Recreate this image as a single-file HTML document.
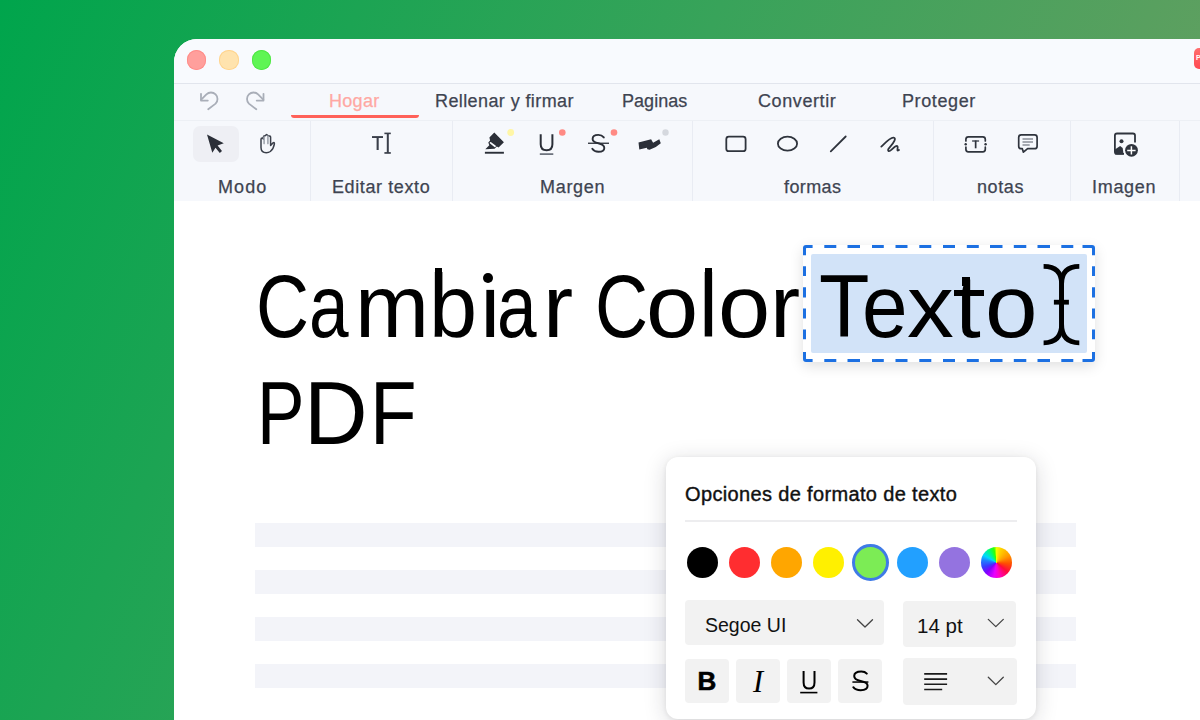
<!DOCTYPE html>
<html><head><meta charset="utf-8">
<style>
*{margin:0;padding:0;box-sizing:border-box}
html,body{width:1200px;height:720px;overflow:hidden}
body{position:relative;font-family:"Liberation Sans",sans-serif;
background:linear-gradient(114deg,rgb(0,165,76) 0%,rgb(56,163,90) 47.5%,rgb(88,160,95) 76%,rgb(114,158,100) 100%);}
.a{position:absolute}
svg.a{left:0;top:0;overflow:visible}
.win{position:absolute;left:0;top:0;width:1200px;height:720px;clip-path:inset(39px 0 0 174px round 23px 0 0 0);background:#fff}
.title{left:174px;top:39px;width:1026px;height:44px;background:#F8FAFE}
.sep1{left:174px;top:82.5px;width:1026px;height:2px;background:linear-gradient(#E0E4EC,#E6E9F0)}
.menu{left:174px;top:84px;width:1026px;height:36px;background:#F6F8FC}
.sep2{left:174px;top:120px;width:1026px;height:1px;background:#EDF0F5}
.tool{left:174px;top:121px;width:1026px;height:80px;background:#F6F8FC}
.vs{top:121px;width:1.3px;height:80px;background:#E9ECF3}
.dot{border-radius:50%}
.tab{top:90px;font-size:18px;color:#3E4451;-webkit-text-stroke:0.25px currentColor;white-space:nowrap;line-height:22px}
.lab{top:175.5px;font-size:18px;color:#3E4451;-webkit-text-stroke:0.25px currentColor;white-space:nowrap;line-height:22px}
.big{font-size:89px;color:#000;white-space:nowrap;line-height:100px;transform-origin:0 0}
.g{font-size:89px;color:#000;white-space:nowrap;line-height:100px;transform-origin:0 0}
.bar{left:255px;width:821px;height:24px;background:#F3F4F9}
.pop{left:666px;top:457px;width:369.5px;height:262px;background:#fff;border-radius:12px;box-shadow:0 4px 22px rgba(30,30,40,0.17),0 1px 5px rgba(0,0,0,0.07)}
.sw{width:31px;height:31px;border-radius:50%;top:546.5px}
.dd{background:#F2F2F2;border-radius:4px}
.btn{top:659px;width:44px;height:44px;background:#F2F2F2;border-radius:4px}
</style></head><body>
<div class="win">
  <div class="a title"></div>
  <div class="a sep1"></div>
  <div class="a menu"></div>
  <div class="a sep2"></div>
  <div class="a tool"></div>
  <!-- traffic lights -->
  <div class="a dot" style="left:186.9px;top:50px;width:19.4px;height:19.6px;background:#FF9F9C;box-shadow:inset 0 0 0 0.9px #FF8C89"></div>
  <div class="a dot" style="left:219.1px;top:50px;width:19.6px;height:19.6px;background:#FFE3AE;box-shadow:inset 0 0 0 0.9px #FFD48E"></div>
  <div class="a dot" style="left:251.5px;top:50px;width:19.5px;height:19.5px;background:#5FF554;box-shadow:inset 0 0 0 0.9px #4FE645"></div>
  <!-- red badge top right -->
  <div class="a" style="left:1194px;top:48px;width:20px;height:21px;border-radius:5px;background:linear-gradient(#FF6E6E,#FF4A52)"></div><div class="a" style="left:1196px;top:54px;font-size:7px;line-height:8px;font-weight:bold;color:#fff">P</div>
  <!-- separators -->
  <div class="a vs" style="left:310px"></div>
  <div class="a vs" style="left:452px"></div>
  <div class="a vs" style="left:692px"></div>
  <div class="a vs" style="left:933px"></div>
  <div class="a vs" style="left:1070px"></div>
  <div class="a vs" style="left:1179px"></div>

  <!-- tabs -->
  <div class="a tab" style="left:329px;color:#FFA8A3;letter-spacing:0.3px">Hogar</div>
  <div class="a" style="left:291px;top:115px;width:128px;height:3px;background:#FF6159;border-radius:0 0 3px 3px"></div>
  <div class="a tab" style="left:435px;letter-spacing:0.4px">Rellenar y firmar</div>
  <div class="a tab" style="left:622px;letter-spacing:0.05px">Paginas</div>
  <div class="a tab" style="left:758px;letter-spacing:0.59px">Convertir</div>
  <div class="a tab" style="left:902px;letter-spacing:0.6px">Proteger</div>

  <!-- labels -->
  <div class="a lab" style="left:218px;letter-spacing:1.08px">Modo</div>
  <div class="a lab" style="left:332px;letter-spacing:0.6px">Editar texto</div>
  <div class="a lab" style="left:540px;letter-spacing:0.7px">Margen</div>
  <div class="a lab" style="left:784px;letter-spacing:0.4px">formas</div>
  <div class="a lab" style="left:977px;letter-spacing:0.6px">notas</div>
  <div class="a lab" style="left:1092px;letter-spacing:0.7px">Imagen</div>

  <!-- pressed button -->
  <div class="a" style="left:193px;top:126px;width:46px;height:36px;border-radius:7px;background:#EEEFF4"></div>

  <!-- toolbar icons -->
  <svg class="a" width="1200" height="720" viewBox="0 0 1200 720">
    <g fill="none" stroke="#A9AEB8" stroke-width="1.8" stroke-linecap="round" stroke-linejoin="round">
      <path d="M208.2,109.3 L215.6,103.6 A6.5,6.5 0 0 0 206.4,94.4 L201.2,99.6"/>
      <path d="M201,93.8 V100.6 H207.8"/>
      <g transform="translate(464.5,0) scale(-1,1)">
        <path d="M208.2,109.3 L215.6,103.6 A6.5,6.5 0 0 0 206.4,94.4 L201.2,99.6"/>
        <path d="M201,93.8 V100.6 H207.8"/>
      </g>
    </g>
    <!-- arrow cursor -->
    <path fill="#2B2F38" d="M207,134.5 L223.8,143.3 L217.6,145.6 L222,151 L219.8,153 L215.5,147.7 L212.3,152.8 Z"/>
    <!-- hand -->
    <g fill="none" stroke="#3A3F4A" stroke-width="1.5" stroke-linejoin="round" stroke-linecap="round">
      <path d="M261,146 V139.2 Q261,138.1 262.3,138.1 Q263.4,138.1 263.4,139.2 V137 Q263.4,135.8 264.9,135.8 L266.6,134.5 L268.3,135.8 Q270.6,135.8 270.6,137.2 V145.5 L272.9,142.9 Q274.6,141.8 274.4,143.8 Q273.6,148.8 270.3,151.5 Q268.6,152.7 266.3,152.7 Q261,152.7 261,147.5 Z"/>
      <path d="M264.1,137 V143.6 M267.9,136 V143.6" stroke="#A0A5AE" stroke-width="1.6"/>
    </g>
    <!-- T I -->
    <g fill="#3A3F4A">
      <rect x="372" y="136.1" width="11" height="1.9"/>
      <rect x="376.6" y="137" width="2.1" height="13"/>
      <rect x="384.4" y="132.6" width="6.4" height="1.6"/>
      <rect x="386.8" y="133" width="2" height="20"/>
      <rect x="384.4" y="152.1" width="6.4" height="1.7"/>
    </g>
    <!-- highlighter -->
    <g fill="#2B2F38">
      <path d="M494.3,132.6 L503.9,142.3 L498.6,147.6 L496.8,146.6 L494.6,148.8 L485.3,149.3 L489.3,145.2 L488.3,142.4 L490.1,140.4 L489.4,137.6 Z"/>
      <rect x="484.9" y="151.8" width="19" height="1.9"/>
    </g>
    <path d="M490.6,142.9 L495,146.3" stroke="#F7F9FD" stroke-width="1.8" stroke-linecap="round"/>
    <circle cx="510.7" cy="132.5" r="3.4" fill="#FFF6A6"/>
    <!-- U -->
    <path d="M540.7,134.2 V144.3 Q540.7,150.3 546.6,150.3 Q552.4,150.3 552.4,144.3 V134.2" fill="none" stroke="#2B2F38" stroke-width="2"/>
    <rect x="539.8" y="153.3" width="13.5" height="1.6" fill="#5F6470"/>
    <circle cx="562.3" cy="132.5" r="3.3" fill="#FF8A84"/>
    <!-- S strike -->
    <path d="M603.8,137.4 Q601.8,134.9 598.3,134.9 Q592.6,134.9 592.6,139 Q592.6,142 598.3,143.3 Q604.3,144.6 604.3,148 Q604.3,151.8 598.4,151.8 Q594.3,151.8 592.3,148.8" fill="none" stroke="#2B2F38" stroke-width="1.9" stroke-linecap="round"/>
    <rect x="588" y="142.6" width="21" height="1.3" fill="#2B2F38"/>
    <circle cx="614" cy="132.5" r="3.3" fill="#FF8A84"/>
    <!-- squiggle -->
    <path fill="#2B2F38" d="M638.5,142.4 L651.1,139.3 L653.1,142.8 L659.3,139.3 L660.8,143.2 L655.8,147.1 L649.6,149.8 L647.4,149.2 L646.8,147.8 L639.3,149.6 Z"/>
    <circle cx="665.5" cy="132.5" r="3.2" fill="#D5D8DE"/>
    <!-- shapes -->
    <g fill="none" stroke="#2F343D" stroke-width="1.8" stroke-linecap="round" stroke-linejoin="round">
      <rect x="726.3" y="136.7" width="19.3" height="14.5" rx="2.5"/>
      <ellipse cx="787.5" cy="143.65" rx="9.6" ry="7"/>
      <path d="M830.8,151.3 L845.7,136.5"/>
      <path d="M881.3,146.6 C886,142 890.5,137.2 893.5,137.6 C896.5,138 894.5,142 889.5,147.6 C886.8,150.6 888.5,152.4 891.6,149.6 C894.6,146.8 897.2,144.6 897.6,146.6 C898,149 896.2,151.8 899,150"/>
    </g>
    <!-- textbox -->
    <g fill="none" stroke="#2F343D" stroke-width="1.7" stroke-linecap="round">
      <path d="M965.9,140.9 V139.3 Q965.9,136.8 968.4,136.8 H982.8 Q985.3,136.8 985.3,139.3 V140.9"/>
      <path d="M965.9,147.2 V149.3 Q965.9,151.8 968.4,151.8 H982.8 Q985.3,151.8 985.3,149.3 V147.2"/>
    </g>
    <circle cx="965.7" cy="144.2" r="1.2" fill="#2F343D"/>
    <circle cx="985.6" cy="144.2" r="1.2" fill="#2F343D"/>
    <rect x="972.1" y="140.2" width="7" height="1.6" fill="#5A5F68"/>
    <rect x="974.8" y="140.5" width="1.7" height="7.8" fill="#2F343D"/>
    <!-- comment -->
    <path d="M1022.3,148.7 H1021.2 Q1018.7,148.7 1018.7,146.2 V137.4 Q1018.7,134.9 1021.2,134.9 H1034.6 Q1037.1,134.9 1037.1,137.4 V146.2 Q1037.1,148.7 1034.6,148.7 H1027.6 L1023.4,152.2 Z" fill="none" stroke="#2F343D" stroke-width="1.7" stroke-linejoin="round"/>
    <g stroke="#8A8F98" stroke-width="1.5">
      <path d="M1022.5,139.1 H1033 M1022.5,141.9 H1033 M1022.5,145 H1029.7"/>
    </g>
    <!-- image -->
    <path d="M1124,153.8 H1117 Q1114.9,153.8 1114.9,151.7 V135.6 Q1114.9,133.5 1117,133.5 H1132.9 Q1135,133.5 1135,135.6 V142.6" fill="none" stroke="#2F343D" stroke-width="1.8"/>
    <circle cx="1121.5" cy="141.3" r="2" fill="#2F343D"/>
    <path d="M1114.9,149.5 L1120.1,146.1 L1122.7,148 L1123.6,154.6 L1114.9,154.6 Z" fill="#2F343D"/>
    <circle cx="1131.5" cy="150.3" r="7.8" fill="#F7F9FD"/>
    <circle cx="1131.5" cy="150.3" r="6.4" fill="#2F343D"/>
    <path d="M1127.2,150.4 H1135.6 M1131.4,146.3 V154.6" stroke="#fff" stroke-width="1.5"/>
  </svg>

  <!-- document -->
  <div class="a bar" style="top:523px"></div>
  <div class="a bar" style="top:570px"></div>
  <div class="a bar" style="top:617px"></div>
  <div class="a bar" style="top:664px"></div>

  <div class="a g" style="left:256.10px;top:256px;transform:scaleX(0.825)">C</div>
  <div class="a g" style="left:309.00px;top:256px;transform:scaleX(0.800)">a</div>
  <div class="a g" style="left:355.25px;top:256px;transform:scaleX(0.999)">m</div>
  <div class="a g" style="left:429.17px;top:256px;transform:scaleX(0.972)">b</div>
  <div class="a g" style="left:477.77px;top:256px;transform:scaleX(0.988)">&#305;</div>
  <div class="a" style="left:483px;top:272.9px;width:9.9px;height:9.9px;border-radius:50%;background:#000"></div>
  <div class="a" style="left:434.8px;top:267.7px;width:7.6px;height:5px;background:#000"></div>
  <div class="a" style="left:704.7px;top:268px;width:7.4px;height:5px;background:#000"></div>
  <div class="a g" style="left:497.30px;top:256px;transform:scaleX(0.800)">a</div>
  <div class="a g" style="left:543.19px;top:256px;transform:scaleX(1.018)">r</div>
  <div class="a g" style="left:594.69px;top:256px;transform:scaleX(0.826)">C</div>
  <div class="a g" style="left:645.98px;top:256px;transform:scaleX(1.055)">o</div>
  <div class="a g" style="left:698.50px;top:256px;transform:scaleX(0.950)">l</div>
  <div class="a g" style="left:717.68px;top:256px;transform:scaleX(1.055)">o</div>
  <div class="a g" style="left:769.89px;top:256px;transform:scaleX(1.018)">r</div>
  <div class="a g" style="left:256.75px;top:363px;transform:scaleX(0.800)">P</div>
  <div class="a g" style="left:304.48px;top:363px;transform:scaleX(0.989)">D</div>
  <div class="a g" style="left:369.70px;top:363px;transform:scaleX(0.857)">F</div>

  <!-- selection box -->
  <div class="a" style="left:803px;top:245px;width:292px;height:117px;border-radius:3px;background:#fff;box-shadow:0 4px 14px rgba(0,0,0,0.13)"></div>
  <div class="a" style="left:811px;top:254px;width:276px;height:99px;border-radius:2px;background:#D2E3F8"></div>
  <div class="a g" style="left:818.64px;top:256px;transform:scaleX(0.928)">T</div>
  <div class="a g" style="left:861.71px;top:256px;transform:scaleX(0.921)">e</div>
  <div class="a g" style="left:906.65px;top:256px;transform:scaleX(1.052)">x</div>
  <div class="a g" style="left:955.4px;top:256px;transform:scaleX(1.04)">t</div>
  <div class="a" style="left:954.1px;top:290.3px;width:29.5px;height:5.9px;background:#000"></div>
  <div class="a" style="left:962.2px;top:277.1px;width:7.9px;height:9px;background:#000"></div>
  <div class="a g" style="left:984.55px;top:256px;transform:scaleX(1.062)">o</div>
  <svg class="a" width="1200" height="720" viewBox="0 0 1200 720">
    <g fill="#1C70E2">
      <!-- corners -->
      <path d="M803,255.3 V248 Q803,245 806,245 H812.6 V248 H806.6 Q806,248 806,248.6 V255.3 Z"/>
      <path d="M1095,255.3 V248 Q1095,245 1092,245 H1082.5 V248 H1091.4 Q1092,248 1092,248.6 V255.3 Z"/>
      <path d="M803,352 V359 Q803,362 806,362 H812.6 V359 H806.6 Q806,359 806,358.4 V352 Z"/>
      <path d="M1095,352 V359 Q1095,362 1092,362 H1082.5 V359 H1091.4 Q1092,359 1092,358.4 V352 Z"/>
    </g>
    <g stroke="#1C70E2" stroke-width="3">
      <path d="M824.3,246.5 H836.3 M847.5,246.5 H860 M872,246.5 H883.8 M895.5,246.5 H907.5 M919.3,246.5 H931.3 M943,246.5 H955 M966.8,246.5 H978.8 M990,246.5 H1002.5 M1013.8,246.5 H1026.3 M1037.5,246.5 H1050 M1061.3,246.5 H1073.3"/>
      <path d="M824.3,360.5 H836.3 M847.5,360.5 H860 M872,360.5 H883.8 M895.5,360.5 H907.5 M919.3,360.5 H931.3 M943,360.5 H955 M966.8,360.5 H978.8 M990,360.5 H1002.5 M1013.8,360.5 H1026.3 M1037.5,360.5 H1050 M1061.3,360.5 H1073.3"/>
      <path d="M804.5,266.2 V276.1 M804.5,287.3 V297.4 M804.5,308.6 V318.5 M804.5,329.4 V339.3"/>
      <path d="M1093.5,266.2 V276.1 M1093.5,287.3 V297.4 M1093.5,308.6 V318.5 M1093.5,329.4 V339.3"/>
    </g>
    <!-- I-beam -->
    <g fill="none" stroke="#000" stroke-width="4.8">
      <path d="M1043.6,266.4 Q1061.6,266.4 1061.6,284 V324 Q1061.6,342.8 1043.6,342.8"/>
      <path d="M1079.3,266.4 Q1061.6,266.4 1061.6,284 V324 Q1061.6,342.8 1079.3,342.8"/>
      <path d="M1053.9,302.2 H1068.9"/>
    </g>
  </svg>

  <!-- popup -->
  <div class="a pop"></div>
  <div class="a" style="left:685px;top:480.7px;font-size:20px;line-height:26px;color:#111;white-space:nowrap;letter-spacing:0.35px;-webkit-text-stroke:0.4px #111">Opciones de formato de texto</div>
  <div class="a" style="left:685px;top:520.3px;width:332px;height:1.5px;background:#EDEDEF"></div>
  <div class="a sw" style="left:687px;background:#000"></div>
  <div class="a sw" style="left:729px;background:#FF2D30"></div>
  <div class="a sw" style="left:771px;background:#FFA600"></div>
  <div class="a sw" style="left:813px;background:#FFF000"></div>
  <div class="a" style="left:851.8px;top:543.7px;width:37px;height:37px;border-radius:50%;background:#7CEC55;border:3.5px solid #3F7BE6"></div>
  <div class="a sw" style="left:897px;background:#22A0FF"></div>
  <div class="a sw" style="left:939px;background:#9473E0"></div>
  <div class="a sw" style="left:981px;background:conic-gradient(#F0FF00 0deg,#FFD000 20deg,#FF9A00 60deg,#FF5000 95deg,#FF0A3C 130deg,#FF00C8 170deg,#E800FF 190deg,#8000FF 225deg,#3A3AFF 250deg,#2080FF 280deg,#00D8FF 300deg,#00FF70 330deg,#30FF00 350deg,#F0FF00 360deg)"></div>

  <div class="a dd" style="left:685px;top:600px;width:199px;height:45px"></div>
  <div class="a dd" style="left:903px;top:601px;width:113px;height:46px"></div>
  <div class="a dd" style="left:903px;top:658px;width:114px;height:47px"></div>
  <div class="a btn" style="left:685px"></div>
  <div class="a btn" style="left:736px"></div>
  <div class="a btn" style="left:787px"></div>
  <div class="a btn" style="left:838px"></div>
  <div class="a" style="left:705px;top:613px;font-size:19.5px;line-height:24px;color:#111;white-space:nowrap">Segoe UI</div>
  <div class="a" style="left:917px;top:614px;font-size:20.5px;line-height:24px;color:#111;white-space:nowrap">14 pt</div>
  <div class="a" style="left:697.5px;top:667.5px;font-size:26px;line-height:26px;font-weight:bold;color:#000;-webkit-text-stroke:0.6px #000">B</div>
  <div class="a" style="left:753px;top:669px;font-size:30.5px;line-height:26px;font-style:italic;font-family:'Liberation Serif',serif;color:#000">I</div>
  <svg class="a" width="1200" height="720" viewBox="0 0 1200 720">
    <g fill="none" stroke="#444" stroke-width="1.3" stroke-linecap="round" stroke-linejoin="round">
      <path d="M857.5,619.8 L865,627 L872.5,619.8"/>
      <path d="M988.3,619.4 L995.8,626.6 L1003.3,619.4"/>
      <path d="M988.3,677.2 L995.8,684.6 L1003.3,677.2"/>
    </g>
    <g stroke="#1a1a1a" stroke-width="1.6">
      <path d="M924.2,673.9 H947.1 M924.2,679.1 H947.1 M924.2,684.3 H947.1 M924.2,689.5 H942.2"/>
    </g>
    <path d="M803.6,671 V682.5 Q803.6,688.6 809.1,688.6 Q814.5,688.6 814.5,682.5 V671" fill="none" stroke="#000" stroke-width="2"/>
    <rect x="800.2" y="691.8" width="17.2" height="1.6" fill="#000"/>
    <path d="M866.8,673.6 Q865,671.5 861.3,671.5 Q854.2,671.5 854.2,676 Q854.2,679.6 860.6,681 Q867.6,682.4 867.6,685.8 Q867.6,690.2 860.7,690.2 Q855.5,690.2 853.3,687.2" fill="none" stroke="#000" stroke-width="2" stroke-linecap="round"/>
    <rect x="852.4" y="681.3" width="16" height="1.5" fill="#000"/>
  </svg>
</div>
</body></html>
